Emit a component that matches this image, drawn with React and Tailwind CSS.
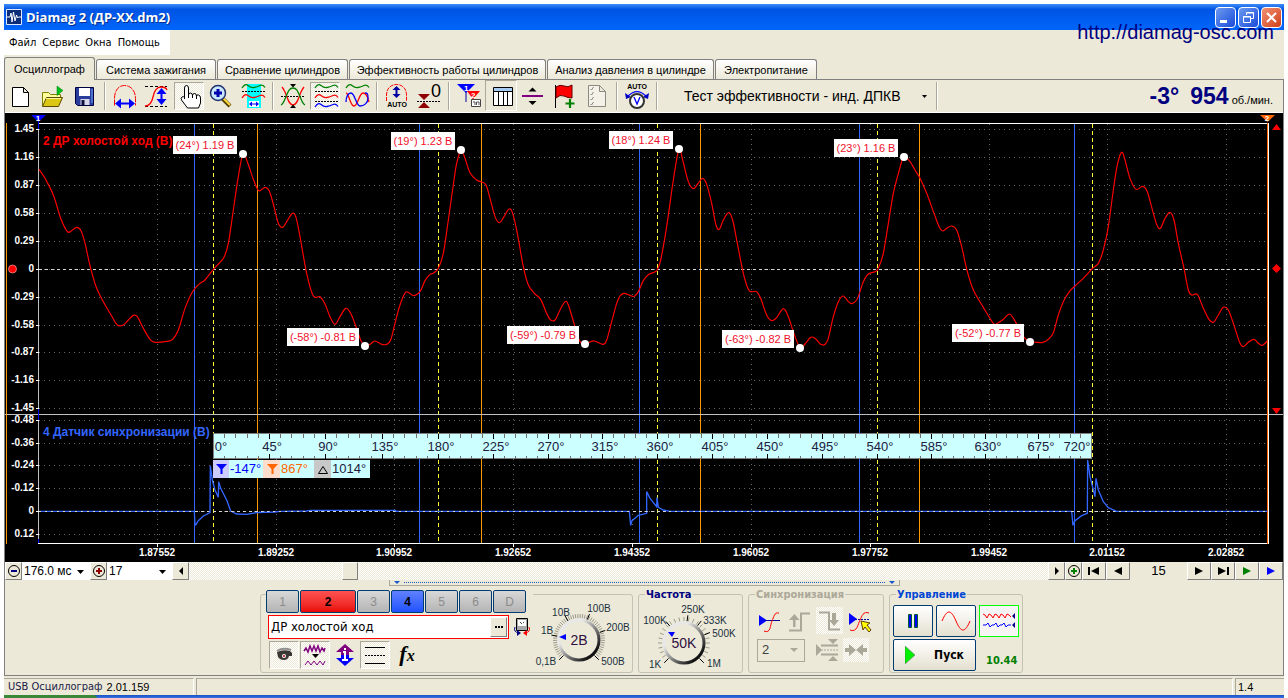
import React, { useState } from "react";

const HATCH =
  "bg-[repeating-conic-gradient(#ffffff_0_25%,#ece9d8_0_50%)] bg-[length:2px_2px]";

/* ---------- Toolbar icons ---------- */

const WAVE = "q3 -5 6 -2.5 t6 2 t6 -2 t5 2";

const NewIcon = () => (
  <path d="M7.5 7.5h11l5 5v14h-16z M18.5 7.5v5h5" fill="#fff" stroke="#000" />
);

const OpenIcon = () => (
  <>
    <path d="M5.5 26V12.5h6l2 2h10V18" fill="#ffff9c" stroke="#808000" />
    <path d="M5.5 26.5l4-9h16l-4 9z" fill="#dcc814" stroke="#5a4a00" />
    <path d="M9 18.500h15" stroke="#fff8a0" />
    <path d="M20 6l6 4.5l-6 5z" fill="#00c020" stroke="#008000" strokeWidth=".5" />
  </>
);

const SaveIcon = () => (
  <>
    <path d="M6.5 7.5h18v18h-16l-2-2z" fill="#2a3c9c" stroke="#000040" />
    <path d="M10 8h11v8H10z" fill="#fff" />
    <path d="M11.5 19h9v6h-9z" fill="#d8d8e8" />
    <path d="M12.5 20h3v5h-3z" fill="#101040" />
    <path d="M23 9v14" stroke="#6aa8ff" />
  </>
);

const WidthIcon = () => (
  <>
    <path
      d="M5.5 25.5v-7c0-8 4-13 10-13s11 5 11 13v7"
      fill="none"
      stroke="#f00"
      strokeDasharray="6 1"
    />
    <path d="M6 23.5l6-5v4h8v-4l6 5l-6 5v-4h-8v4z" fill="#0000ff" />
  </>
);

const StepIcon = () => (
  <>
    <path d="M4 6.5h22M4 26.5h22" stroke="#000" strokeDasharray="3 2" />
    <path
      d="M4 26c5 0 7-4 8-9s3-10 8-10q5 0 6 3"
      fill="none"
      stroke="#f00"
      strokeWidth="1.3"
    />
    <path d="M20.5 8l5 6h-4v5h4l-5 6l-5-6h4v-5h-4z" fill="#0000ff" />
  </>
);

const HandIcon = () => (
  <path
    d="M11.5 19V8q0-2.500 2-2.500t2 2.500v7q0-2 2-2t2 2.500q0-2 2-2t2 2.500q0-1.500 2-1t2 3v5l-2 5h-11l-6-8q-1-2 .5-3t2.500 .5zM15.5 14v4M19.5 15v3M23.5 16v3"
    fill="#fff"
    stroke="#000"
  />
);

const ZoomIcon = () => (
  <>
    <path d="M17 18l8 8" stroke="#504000" strokeWidth="4" />
    <path d="M18 18l7 7" stroke="#ffd840" strokeWidth="2" />
    <circle cx="13" cy="13" r="7.5" fill="#c8e8ff" stroke="#203070" strokeWidth="1.5" />
    <path d="M13 9v8M9 13h8" stroke="#0000b0" strokeWidth="3" />
  </>
);

const CyanIcon = () => (
  <>
    <path d="M10 4h14v24H10z" fill="#00ffff" />
    <path d={`M5 8${WAVE}`} fill="none" stroke="#008000" strokeWidth="1.3" />
    <path d="M5 11.5h23" stroke="#000" strokeDasharray="2 1" />
    <path d={`M5 18${WAVE}`} fill="none" stroke="#f00" strokeWidth="1.3" />
    <path d="M12 21h10v6H12z" fill="#fff" />
    <path d="M12 24l3-2.500v2h4v-2l3 2.500l-3 2.500v-2h-4v2z" fill="#0000ff" />
  </>
);

const CrossIcon = () => (
  <>
    <path d="M4 16.5h23" stroke="#000" strokeDasharray="2 1" />
    <path
      d="M5 7q1 1 3 5c3 7 4 13 8 13s5-6 8-13q2-4 3-5"
      fill="none"
      stroke="#f00"
      strokeWidth="1.3"
    />
    <path
      d="M4 25q2-1 4-6c3-7 4-11 8-11s5 4 8 11q2 5 4 6"
      fill="none"
      stroke="#008000"
      strokeWidth="1.3"
    />
    <path d="M13 4h6l-3 3.500zM13 28h6l-3-3.500z" fill="#000" />
  </>
);

const ThreeIcon = () => (
  <>
    <path d={`M6 8${WAVE}`} fill="none" stroke="#008000" strokeWidth="1.3" />
    <path d={`M6 18${WAVE}`} fill="none" stroke="#f00" strokeWidth="1.3" />
    <path d={`M6 27${WAVE}`} fill="none" stroke="#0000ff" strokeWidth="1.3" />
    <path d="M6 11.5h23M6 21.5h23" stroke="#000" strokeDasharray="2 1" />
  </>
);

const OverlapIcon = () => (
  <>
    <path d={`M5 8${WAVE}`} fill="none" stroke="#008000" strokeWidth="1.3" />
    <path
      d="M5 13c3 0 4 13 8 13s5-13 9-13s5 5 6 9"
      fill="none"
      stroke="#f00"
      strokeWidth="1.3"
    />
    <path
      d="M5 22c0-5 2-9 5-9c4 0 5 13 9 13s8-3 8-8s-1-5-3-5"
      fill="none"
      stroke="#0000ff"
      strokeWidth="1.3"
    />
  </>
);

const AutoIcon = () => (
  <>
    <path
      d="M5.5 21v-6c0-7 5-10.500 10-10.500s10 3.500 10 10.500v6"
      fill="none"
      stroke="#f00"
      strokeDasharray="4 1"
    />
    <path d="M15.5 6l4 4h-3v4h3l-4 4l-4-4h3v-4h-3z" fill="#0000a0" />
    <text x="16" y="27" textAnchor="middle" fontSize="7" fontWeight="bold">
      AUTO
    </text>
  </>
);

const ZeroIcon = () => (
  <>
    <path d="M5 14h12l-6 6zM5 28h12l-6-6z" fill="#900000" />
    <path d="M4 21.5h24" stroke="#000" strokeDasharray="2 1" />
    <text x="23" y="17" textAnchor="middle" fontSize="18">
      0
    </text>
  </>
);

const MarkerIcon = () => (
  <>
    <path d="M4 4h18l-9 9z" fill="#0000ff" />
    <path d="M13 12v10" stroke="#0000a0" />
    <path d="M14 11h13l-7 8z" fill="#f00" />
    <path d="M20 18v7" stroke="#f00" />
    <text x="11" y="11" fontSize="8" fontWeight="bold" fill="#fff">
      1
    </text>
    <text x="18" y="18" fontSize="8" fontWeight="bold" fill="#fff">
      2
    </text>
    <path d="M18.5 19.5h9v7h-9z" fill="#fff" stroke="#444" />
    <path d="M20 22h2v3M23.5 25v-3h2.500v3" fill="none" stroke="#555" />
  </>
);

const TableIcon = () => (
  <>
    <path d="M8.5 7.5h19v18h-19z" fill="#fff" stroke="#000" />
    <path d="M9 8h18v3H9z" fill="#a6caf0" />
    <path d="M9 11.5h18M13.5 11v14M18.5 11v14M22.5 11v14" stroke="#000" />
  </>
);

const DivideIcon = () => (
  <>
    <path d="M5 16h21" stroke="#800080" strokeWidth="2" />
    <path d="M11.5 11.5h8l-4-4zM11.5 21h8l-4 4z" fill="#000" />
  </>
);

const FlagIcon = () => (
  <>
    <path d="M6.5 5v23" stroke="#000" />
    <path
      d="M7 7q4-3 8-1t8-1v13q-4 0-8-2t-8 2z"
      fill="#f00"
      stroke="#600000"
    />
    <path d="M21 19v9M16.5 23.5h9" stroke="#008000" strokeWidth="2.2" />
  </>
);

const ListIcon = () => (
  <>
    <path
      d="M7.5 5.5h11l6 6v15h-17z M18.5 5.5v6h6"
      fill="#f4f2e8"
      stroke="#8c8a80"
    />
    <path
      d="M9.5 9l1 1l2-3M9.5 14l1 1l2-3M9.5 19l1 1l2-3M9.5 24l1 1l2-3"
      fill="none"
      stroke="#8c8a80"
    />
  </>
);

const AutoVIcon = () => (
  <>
    <text x="16" y="9" textAnchor="middle" fontSize="7" fontWeight="bold">
      AUTO
    </text>
    <path d="M7 16q9-9 18 0" fill="none" stroke="#0000ff" strokeWidth="1.2" />
    <path d="M4 13l1 6l5-2zM28 13l-1 6l-5-2z" fill="#0000c0" />
    <circle cx="16" cy="21" r="7" fill="#fff" stroke="#333" strokeWidth="2" />
    <path d="M13 17l3 7l3-7" fill="none" stroke="#0000ff" strokeWidth="1.3" />
  </>
);

const TOOL_GROUPS = [
  [
    { label: "Новый", Icon: NewIcon },
    { label: "Открыть", Icon: OpenIcon },
    { label: "Сохранить", Icon: SaveIcon },
  ],
  [
    { label: "Период", Icon: WidthIcon },
    { label: "Фронт", Icon: StepIcon },
    { label: "Рука", Icon: HandIcon, pressed: true },
    { label: "Масштаб", Icon: ZoomIcon },
    { label: "Выделение", Icon: CyanIcon },
  ],
  [
    { label: "Наложить", Icon: CrossIcon },
    { label: "Разделить", Icon: ThreeIcon, pressed: true },
    { label: "Совместить", Icon: OverlapIcon },
  ],
  [
    { label: "Авто", Icon: AutoIcon },
    { label: "Ноль", Icon: ZeroIcon },
  ],
  [
    { label: "Маркеры", Icon: MarkerIcon },
    { label: "Таблица", Icon: TableIcon, flat: true },
    { label: "Разделитель", Icon: DivideIcon },
    { label: "Флаг", Icon: FlagIcon },
    { label: "Список", Icon: ListIcon },
  ],
  [{ label: "Авто напряжение", Icon: AutoVIcon }],
];

const ToolButton = ({ label, Icon, pressed, flat }) => (
  <button aria-label={label} className="relative h-8 w-8">
    {pressed && (
      <span
        className={`absolute inset-x-px top-0.5 bottom-0.5 border border-t-[#aca899] border-l-[#aca899] border-r-white border-b-white ${HATCH}`}
      />
    )}
    {flat && (
      <span className="absolute inset-0 bottom-px border border-t-[#aca899] border-l-[#aca899] border-r-white border-b-white" />
    )}
    <svg viewBox="0 0 32 32" className="relative h-8 w-8">
      <Icon />
    </svg>
  </button>
);

const Separator = () => (
  <span className="flex w-2 justify-center py-0.5">
    <span className="w-0.5 border-l border-[#aca899] bg-white" />
  </span>
);

/* ---------- Header ---------- */

const TitleBar = () => (
  <header className="relative flex h-[26px] items-center justify-between bg-linear-to-b from-[#3c8cf8] via-[#0054e3] via-20% to-[#0066fc] px-0.5">
    <div className="flex items-center gap-1">
      <svg viewBox="0 0 16 16" className="h-4 w-4">
        <path d="M.5 .5h15v15H.5z" fill="#0c2c78" stroke="#dfe8ff" />
        <path
          d="M1 8h3l1-4l1 9l1.500-10l1.500 9l1.500-6l1 3l1-1h3"
          fill="none"
          stroke="#fff"
        />
      </svg>
      <h1 className="font-['Open_Sans',sans-serif] text-[13px] leading-5 font-bold text-white [text-shadow:1px_1px_#00308f]">
        Diamag 2 (ДР-XX.dm2)
      </h1>
    </div>
    <div className="flex gap-0.5">
      <button
        aria-label="Свернуть"
        className="h-[21px] w-[21px] rounded-sm border border-white bg-linear-to-br from-[#6c98f0] to-[#1c48d8]"
      >
        <svg viewBox="0 0 19 19">
          <path d="M4 12h7v3H4z" fill="#fff" />
        </svg>
      </button>
      <button
        aria-label="Развернуть"
        className="h-[21px] w-[21px] rounded-sm border border-white bg-linear-to-br from-[#6c98f0] to-[#1c48d8]"
      >
        <svg viewBox="0 0 19 19">
          <path
            d="M7.5 7V4.5h7v6H12M4.5 8.5h7v6h-7zM4 9h8M7 5h8"
            fill="none"
            stroke="#fff"
          />
        </svg>
      </button>
      <button
        aria-label="Закрыть"
        className="h-[21px] w-[21px] rounded-sm border border-white bg-linear-to-br from-[#f09070] to-[#d03c10]"
      >
        <svg viewBox="0 0 19 19">
          <path d="M5 5l9 9M14 5l-9 9" stroke="#fff" strokeWidth="2" />
        </svg>
      </button>
    </div>
    <a
      href="http://diamag-osc.com"
      className="absolute top-4 right-2.5 text-[20px] leading-6 text-[#000080]"
    >
      http://diamag-osc.com
    </a>
  </header>
);

const MenuBar = () => (
  <nav className="flex h-[25px]">
    <div className="flex items-center gap-1.5 bg-white pr-2.5 pl-[5px] font-['DejaVu_Sans_Condensed','DejaVu_Sans',sans-serif] text-[11px] leading-4">
      {["Файл", "Сервис", "Окна", "Помощь"].map((item) => (
        <button key={item}>{item}</button>
      ))}
    </div>
  </nav>
);

const TABS = [
  { name: "Осциллограф", width: "w-[91px]" },
  { name: "Система зажигания", width: "w-[120px]" },
  { name: "Сравнение цилиндров", width: "w-[131px]" },
  { name: "Эффективность работы цилиндров", width: "w-[197px]" },
  { name: "Анализ давления в цилиндре", width: "w-[167px]" },
  { name: "Электропитание", width: "w-[102px]" },
];

const TabBar = () => {
  const [active, setActive] = useState(0);
  return (
    <div role="tablist" className="mt-0.5 flex items-end gap-px text-[11px] leading-4">
      {TABS.map((tab, i) => (
        <button
          key={tab.name}
          role="tab"
          aria-selected={i === active}
          onClick={() => setActive(i)}
          className={`${tab.width} rounded-t-[3px] border border-b-0 border-[#808080] whitespace-nowrap ${
            i === active
              ? "relative -mb-px h-[23px] bg-[#ece9d8]"
              : "h-5 bg-linear-to-b from-white to-[#ece9d8]"
          }`}
        >
          {tab.name}
        </button>
      ))}
    </div>
  );
};

const Toolbar = () => (
  <div className="flex h-8 items-center justify-between">
    <div className="flex">
      {TOOL_GROUPS.map((group, i) => (
        <React.Fragment key={i}>
          {group.map((tool) => (
            <ToolButton key={tool.label} {...tool} />
          ))}
          <Separator />
        </React.Fragment>
      ))}
      <div className="flex h-8 w-[272px] items-center justify-between pr-1.5 pl-[23px]">
        <button className="text-[14px] whitespace-nowrap">
          Тест эффективности - инд. ДПКВ
        </button>
        <svg viewBox="0 0 5 3" className="h-[3px] w-[5px]">
          <path d="M0 0h5L2.5 3z" />
        </svg>
      </div>
      <Separator />
    </div>
    <p className="flex items-baseline gap-[3px] pr-2.5 whitespace-nowrap">
      <span className="mr-2 text-[23px] leading-8 font-bold text-[#000080]">-3°</span>
      <span className="text-[23px] leading-8 font-bold text-[#000080]">954</span>
      <span className="text-[11px]">об./мин.</span>
    </p>
  </div>
);

/* ---------- Oscillogram ---------- */

// Samples are stored as x,y pairs, three units per chart pixel
const RED_TRACE = [
  {
    origin: [0, 110],
    points:
      "117,178 135,205 160,255 182,325 202,365 215,362 230,352 243,362 255,400 272,475 290,535 310,575 335,618 352,645 370,645 385,630 400,616 412,620 430,655 450,688 465,697 500,694 518,688 535,660 555,595 572,555 585,535 600,520 615,510 640,478 655,462 672,442 685,400 700,300 715,200 729,132 743,158 760,208 775,241 786,238 796,232 808,243 822,290 835,340 848,352 862,332 877,310 888,322 900,380 920,490 940,558 960,560 975,582 990,620 1005,643 1020,620 1037,595 1052,610 1070,655 1082,690 1094,707 1110,703 1125,693 1145,703 1160,703 1172,690 1185,640 1200,585 1218,546 1240,557 1260,545 1275,512 1290,493",
  },
  {
    origin: [430, 120],
    points:
      "0,463 12,458 25,445 40,400 55,300 72,180 80,130 93,90 105,115 120,158 140,180 155,186 168,195 180,235 195,290 208,308 222,290 237,267 248,280 262,340 280,440 295,495 315,522 332,538 350,580 362,600 375,600 390,570 405,545 415,555 435,620 450,665 465,672 478,667 493,663 518,673 530,660 545,605 560,550 570,528 582,520 600,526 613,529 625,515 640,482 655,464 680,452 692,420 710,320 730,180 747,87 758,120 775,185 790,206 803,192 818,175 830,193 845,250 858,315 868,328 880,300 896,278 908,300 922,370 940,460 955,508 965,515 980,515 992,535 1010,585 1025,602 1040,593 1060,566 1075,590 1090,635 1110,684 1125,672 1142,652 1155,655 1172,673 1185,673 1195,655 1210,590 1225,545 1240,528 1255,545 1265,551 1280,540 1290,515",
  },
  {
    origin: [860, 110],
    points:
      "0,545 10,515 25,492 45,485 55,475 70,430 85,340 100,250 118,180 131,141 148,152 165,180 180,205 200,250 222,310 238,352 248,363 260,355 275,348 290,360 305,410 322,485 340,540 370,592 400,640 412,640 430,628 448,612 462,628 480,662 495,685 510,695 530,697 548,697 565,688 580,668 595,615 610,575 628,545 645,528 670,505 698,475 715,460 730,420 745,350 760,240 772,165 785,127 795,150 810,205 828,238 848,229 862,245 880,310 892,348 902,354 915,325 930,307 942,330 955,400 972,475 985,540 995,555 1012,553 1028,590 1045,625 1060,637 1075,615 1090,592 1105,600 1125,655 1138,695 1150,710 1165,697 1182,688 1195,700 1207,706 1222,693",
  },
];

const BLUE_TRACE = [
  {
    origin: [0, 400],
    points:
      "117,334 583,334 585,375 588,374 590,370 595,362 610,348 630,338 631,197 637,240 645,270 655,292 656,245 662,265 680,300 692,333 710,342 740,343 770,338 825,336 840,334 920,333 930,331 1185,331 1190,334 1290,334",
  },
  {
    origin: [430, 400],
    points:
      "0,334 598,334 602,376 606,362 625,346 650,340 650,275 660,295 680,320 681,292 685,322 700,330 720,334 1290,334",
  },
  {
    origin: [860, 400],
    points:
      "0,334 635,334 639,376 645,362 665,347 682,340 683,180 690,230 705,290 708,235 715,270 730,305 745,323 770,334 1222,334",
  },
];

// Catmull-Rom spline through the samples
const smooth = (points) => {
  const p = points.split(" ").map((s) => s.split(",").map(Number));
  let d = `M${p[0]}`;
  for (let i = 0; i < p.length - 1; i++) {
    const a = p[i - 1] || p[i];
    const b = p[i];
    const c = p[i + 1];
    const e = p[i + 2] || c;
    d += `C${b[0] + (c[0] - a[0]) / 6},${b[1] + (c[1] - a[1]) / 6} ${
      c[0] - (e[0] - b[0]) / 6
    },${c[1] - (e[1] - b[1]) / 6} ${c}`;
  }
  return d;
};

const UPPER_AXIS = [
  ["1.45", 129], ["1.16", 157], ["0.87", 185], ["0.58", 213], ["0.29", 241],
  ["0", 269], ["-0.29", 297], ["-0.58", 325], ["-0.87", 352], ["-1.16", 380],
  ["-1.45", 408],
];
const LOWER_AXIS = [
  ["-0.48", 420], ["-0.36", 443], ["-0.24", 465], ["-0.12", 488], ["0", 511],
  ["0.12", 534],
];
const TIME_AXIS = [
  ["1.87552", 157], ["1.89252", 276], ["1.90952", 394], ["1.92652", 513],
  ["1.94352", 632], ["1.96052", 751], ["1.97752", 870], ["1.99452", 989],
  ["2.01152", 1107], ["2.02852", 1226],
];
const CURSORS = [
  { color: "#3366ff", xs: [194, 419, 639, 859, 1074] },
  { color: "#ff9900", xs: [257, 481, 700, 919] },
];
const PHASES = [213, 438, 657, 877, 1092];
const CALLOUTS = [
  ["(24°) 1.19 В", 243, 154], ["(19°) 1.23 В", 461, 150],
  ["(18°) 1.24 В", 679, 149], ["(23°) 1.16 В", 904, 157],
  ["(-58°) -0.81 В", 365, 346], ["(-59°) -0.79 В", 585, 344],
  ["(-63°) -0.82 В", 800, 348], ["(-52°) -0.77 В", 1030, 342],
];
const RULER = [
  213, 269, 325, 382, 438, 493, 548, 602, 657, 712, 767, 822, 877, 931, 985,
  1038, 1091,
];

const Ruler = () => (
  <g>
    <rect x="213.5" y="433.5" width="878" height="25" fill="#ccffff" stroke="#808080" />
    {RULER.map((x, i) => (
      <g key={x} shapeRendering="crispEdges">
        {i > 0 && i < 16 && (
          <path d={`M${x + 0.5} 434v5M${x + 0.5} 454v5`} stroke="#000" />
        )}
        {i < 16 &&
          [1, 2, 3, 4].map((k) => {
            const mx = Math.round(x + ((RULER[i + 1] - x) * k) / 5) + 0.5;
            return (
              <path key={k} d={`M${mx} 434v4M${mx} 456v3`} stroke="#707070" />
            );
          })}
      </g>
    ))}
    {RULER.map((x, i) => (
      <text
        key={x}
        x={i === 0 ? 221 : i === 16 ? 1077 : x + 3}
        y="451"
        textAnchor="middle"
        fontSize="13"
        fill="#202040"
      >
        {i * 45}°
      </text>
    ))}
    <rect x="213" y="460" width="157" height="18" fill="#ccffff" />
    <rect x="213" y="460" width="16" height="18" fill="#ccccff" />
    <rect x="263" y="460" width="17" height="18" fill="#ffddcc" />
    <rect x="314" y="460" width="17" height="18" fill="#c8c8c8" />
    <path d="M216 464h11l-4.500 5v5h-2v-5z" fill="#0000ff" />
    <path d="M267 464h11l-4.500 5v5h-2v-5z" fill="#ff6600" />
    <path d="M318.5 473.5h9l-4.500-7z" fill="none" stroke="#000" />
    <g fontSize="13">
      <text x="230" y="473" fill="#0000ff">-147°</text>
      <text x="281" y="473" fill="#ff6600">867°</text>
      <text x="332" y="473" fill="#202040">1014°</text>
    </g>
  </g>
);

const Oscillogram = () => (
  <svg
    viewBox="5 113 1278 449"
    className="block w-full bg-black font-['Liberation_Sans',Arial,sans-serif]"
  >
    <g stroke="#666" strokeDasharray="1 4" shapeRendering="crispEdges">
      {[...UPPER_AXIS, ...LOWER_AXIS].map(([, y]) => (
        <path key={y} d={`M39 ${y + 0.5}H1267`} />
      ))}
      {TIME_AXIS.map(([, x]) => (
        <path key={x} d={`M${x + 0.5} 124V543`} />
      ))}
    </g>

    <g fill="#f00" fontSize="12" fontWeight="bold">
      <text x="43" y="145">2 ДР холостой ход (В)</text>
      <text x="43" y="436" fill="#3366ff">4 Датчик синхронизации (В)</text>
    </g>

    <g shapeRendering="crispEdges" fill="none">
      {CURSORS.map(({ color, xs }) =>
        xs.map((x) => <path key={x} d={`M${x + 0.5} 124V543`} stroke={color} />)
      )}
      {PHASES.map((x) => (
        <path
          key={x}
          d={`M${x + 0.5} 124V543`}
          stroke="#ffff33"
          strokeDasharray="4 3"
        />
      ))}
      <path d="M5 414.5H1283" stroke="#c0c0c0" />
      <path d="M6.5 123V544" stroke="#ff9900" />
      <path d="M38.5 123V543" stroke="#c0c0c0" />
      <path d="M38 123.5H1268.5V543.5H38" stroke="#fff" />
      <path d="M1267.5 123V544" stroke="#ff6600" />
      <path d="M38.5 121v8M38.5 408v12M38.5 539v4" stroke="#0000ff" />
      {[...UPPER_AXIS, ...LOWER_AXIS].map(([, y]) => (
        <path key={y} d={`M36 ${y + 0.5}h3`} stroke="#fff" />
      ))}
      {TIME_AXIS.map(([, x]) => (
        <path key={x} d={`M${x + 0.5} 544v3`} stroke="#fff" />
      ))}
    </g>

    <path
      d="M39 269.5H1267M39 511.5H1267"
      stroke="#d8d8d8"
      strokeDasharray="3 3"
      shapeRendering="crispEdges"
    />
    {RED_TRACE.map(({ origin, points }) => (
      <path
        key={origin[0]}
        d={smooth(points)}
        transform={`translate(${origin}) scale(0.33333)`}
        fill="none"
        stroke="#f00"
        strokeWidth="3.5"
      />
    ))}
    {BLUE_TRACE.map(({ origin, points }) => (
      <polyline
        key={origin[0]}
        points={points}
        transform={`translate(${origin}) scale(0.33333)`}
        fill="none"
        stroke="#3366ff"
        strokeWidth="4"
      />
    ))}
    <path
      d="M39 511.5H1267"
      stroke="#d8d8d8"
      strokeDasharray="2 4"
      shapeRendering="crispEdges"
    />

    <g fill="#fff" fontSize="10" fontWeight="bold">
      {[...UPPER_AXIS, ...LOWER_AXIS].map(([label, y]) => (
        <text key={y} x="34" y={y + 3} textAnchor="end">
          {label}
        </text>
      ))}
      {TIME_AXIS.map(([label, x]) => (
        <text key={x} x={x} y="556" textAnchor="middle">
          {label}
        </text>
      ))}
    </g>

    {CALLOUTS.map(([label, x, y]) => {
      const width = label.startsWith("(-") ? 72 : 64;
      return (
        <g key={label}>
          <rect x={x - 6 - width} y={y - 18} width={width} height="18" fill="#fff" />
          <text
            x={x - 6 - width / 2}
            y={y - 5}
            textAnchor="middle"
            fontSize="11"
            fill="#f0102c"
          >
            {label}
          </text>
          <circle cx={x} cy={y} r="4" fill="#fff" />
        </g>
      );
    })}

    <Ruler />

    <path d="M31 115h15l-7.500 7z" fill="#0000ff" />
    <path d="M1260 115h15l-7.500 7z" fill="#ff6600" />
    <g fill="#fff" fontSize="8" fontWeight="bold" textAnchor="middle">
      <text x="38" y="121">1</text>
      <text x="1267" y="121">2</text>
    </g>
    <circle cx="12.5" cy="269" r="4" fill="#f00" stroke="#ffa0a0" strokeWidth=".7" />
    <path
      d="M1272 130h9l-4.500-6zM1272 268.5l4.500-4.500l4.500 4.500l-4.500 4.500zM1272 408h9l-4.500 6z"
      fill="#f00"
    />
  </svg>
);

/* ---------- Navigation row ---------- */

const RAISED =
  "flex items-center justify-center border border-t-white border-l-white border-r-[#808080] border-b-[#808080] bg-[#ece9d8]";

const NavButton = ({ label, d, color = "#000", width = "w-6" }) => (
  <button aria-label={label} className={`${RAISED} ${width} h-[18px] shrink-0`}>
    <svg viewBox="0 0 14 14" className="h-3.5 w-3.5">
      <path d={d} fill={color} />
    </svg>
  </button>
);

const CircleButton = ({ label, color, plus }) => (
  <button aria-label={label} className={`${RAISED} h-[18px] w-[17px] shrink-0`}>
    <svg viewBox="0 0 14 14" className="h-3.5 w-3.5 shrink-0">
      <circle cx="7" cy="7" r="5.5" fill="none" stroke="#000" />
      <path d={plus ? "M7 4v6M4 7h6" : "M4 7h6"} stroke={color} strokeWidth="2" />
    </svg>
  </button>
);

const DropDown = ({ label, value, width }) => (
  <span className={`relative ${width} h-[18px] shrink-0 bg-white`}>
    <select
      aria-label={label}
      defaultValue={value}
      className="block h-[18px] w-full appearance-none bg-white pl-0.5 text-[12px] leading-[18px]"
    >
      <option>{value}</option>
    </select>
    <svg viewBox="0 0 7 4" className="pointer-events-none absolute top-2 right-1.5 h-1 w-[7px]">
      <path d="M0 0h7L3.5 4z" />
    </svg>
  </span>
);

const NavRow = () => (
  <div className="flex h-[18px] items-center">
    <CircleButton label="Уменьшить" color="#000080" />
    <DropDown label="Развёртка" value="176.0 мс" width="w-[68px]" />
    <CircleButton label="Увеличить" color="#900000" plus />
    <DropDown label="Кадр" value="17" width="w-[65px]" />
    <NavButton label="Назад" d="M9 3v8L5 7z" width="w-[17px]" />
    <div className={`flex h-[18px] flex-1 pl-[153px] ${HATCH}`}>
      <span className={`${RAISED} h-[18px] w-4`} />
    </div>
    <NavButton label="Вперёд" d="M5 3v8l4-4z" width="w-[17px]" />
    <CircleButton label="Добавить" color="#008000" plus />
    <NavButton label="В начало" d="M1 3h2v8H1zM12 3v8L4 7z" />
    <NavButton label="Предыдущий" d="M11 3v8L3 7z" />
    <output className="w-[57px] text-center text-[13px] leading-[18px]">15</output>
    <NavButton label="Следующий" d="M3 3v8l8-4z" />
    <NavButton label="В конец" d="M2 3v8l8-4zM11 3h2v8h-2z" />
    <NavButton label="Воспроизвести" d="M3 3v8l8-4z" color="#008000" />
    <NavButton label="Пуск записи" d="M3 3v8l8-4z" color="#0000ff" />
  </div>
);

/* ---------- Bottom panels ---------- */

const Group = ({ title, color, width, children }) => (
  <fieldset
    className={`relative ${width} mt-2 h-[79px] shrink-0 rounded-[3px] border border-[#c4c2b4]`}
  >
    {title && (
      <legend
        className={`absolute -top-2 left-1.5 bg-[#ece9d8] px-px font-['DejaVu_Sans_Condensed','DejaVu_Sans',sans-serif] text-[11px] leading-4 font-bold ${color}`}
      >
        {title}
      </legend>
    )}
    {children}
  </fieldset>
);

const Knob = ({ cx, cy, value, labels, pointer, ticks, id }) => {
  const marks = Array.from({ length: ticks }, (_, i) => {
    const a = ((135 + (270 * i) / (ticks - 1)) * Math.PI) / 180;
    return [Math.cos(a), Math.sin(a)];
  });
  return (
    <>
      <defs>
        <linearGradient id={id} x1="0" y1="0" x2="1" y2="1">
          <stop offset="0.3" stopColor="#e8e8e8" />
          <stop offset="0.85" stopColor="#101010" />
        </linearGradient>
      </defs>
      {marks.map(([c, s], i) => (
        <path
          key={i}
          d={`M${cx + c * 22} ${cy + s * 22}L${cx + c * 26} ${cy + s * 26}`}
          stroke="#9c9a8c"
        />
      ))}
      {labels.map(([text, x, y, angle]) => {
        const a = (angle * Math.PI) / 180;
        return (
          <g key={text}>
            <path
              d={`M${cx + Math.cos(a) * 22} ${cy - Math.sin(a) * 22}L${
                cx + Math.cos(a) * 28
              } ${cy - Math.sin(a) * 28}`}
              stroke="#000"
            />
            <text x={x} y={y + 4} textAnchor="middle" fontSize="10" fill="#203040">
              {text}
            </text>
          </g>
        );
      })}
      <circle cx={cx} cy={cy} r="20" fill="#ece9d8" stroke={`url(#${id})`} strokeWidth="3" />
      <path d={pointer} fill="#0000ff" />
      <text x={cx} y={cy + 5} textAnchor="middle" fontSize="14" fill="#301040">
        {value}
      </text>
    </>
  );
};

const GREY = "bg-linear-to-b from-[#d8d8d8] to-[#b4b4b4] text-[#8c8c8c]";
const CHANNELS = [
  { name: "1", style: `w-[33px] ${GREY}` },
  { name: "2", style: "w-14 bg-linear-to-b from-[#ff5050] to-[#e80000] font-bold text-black" },
  { name: "3", style: `w-[33px] ${GREY}` },
  { name: "4", style: "w-[33px] bg-linear-to-b from-[#6080ff] to-[#2050ff] font-bold text-black" },
  { name: "5", style: `w-[33px] ${GREY}` },
  { name: "6", style: `w-[33px] ${GREY}` },
  { name: "D", style: `w-[33px] ${GREY}` },
];

const SUNKEN = `border border-t-[#aca899] border-l-[#aca899] border-r-white border-b-white ${HATCH}`;

const ChannelPanel = () => (
  <Group width="w-[373px]">
    <div className="flex">
      <div className="-mt-[5px] flex w-[272px] flex-col pl-[5px]">
        <div className="flex gap-px bg-[#ece9d8]">
          {CHANNELS.map((ch) => (
            <button
              key={ch.name}
              className={`h-[23px] rounded-[2px] border border-[#003c74] text-[12px] leading-5 ${ch.style}`}
            >
              {ch.name}
            </button>
          ))}
        </div>
        <div className="mt-0.5 flex items-center gap-1 pl-0.5">
          <div className="flex h-6 w-[241px] border border-[#f00] bg-white p-px">
            <input
              aria-label="Имя канала"
              defaultValue="ДР холостой ход"
              className="min-w-0 flex-1 bg-white px-px font-['DejaVu_Sans_Condensed','DejaVu_Sans',sans-serif] text-[13px] leading-5 outline-none"
            />
            <button aria-label="Выбрать" className={`${RAISED} w-[17px] gap-px`}>
              <span className="h-0.5 w-0.5 bg-black" />
              <span className="h-0.5 w-0.5 bg-black" />
              <span className="h-0.5 w-0.5 bg-black" />
            </button>
          </div>
          <button aria-label="Сменить датчик">
            <svg viewBox="0 0 18 20" className="h-5 w-[18px]">
              <path d="M3.5 1.5h11v12h-11z" fill="#a8a8a8" stroke="#000" />
              <path d="M5 3h8v6H5z" fill="#fff" />
              <path d="M7 5l2 2M11 5l-1 1" stroke="#444" />
              <path d="M2 10q-2 5 4 6" fill="none" stroke="#000080" />
              <path d="M4 13l4 3l-4 3z" fill="#000080" />
              <path d="M16 10q2 5-4 6" fill="none" stroke="#f00" />
              <path d="M14 13l-4 3l4 3z" fill="#f00" />
            </svg>
          </button>
        </div>
        <div className="mt-px flex h-[29px] items-center gap-px pl-[3px]">
          <button aria-label="Видимость" className={`${SUNKEN} h-7 w-[30px]`}>
            <svg viewBox="0 0 28 26">
              <path d="M7 10q6-3 13-1l2 2v3h-3q-1 4-5 4t-6-3z" fill="#3a3634" />
              <path d="M7 9q6-4 14-1" fill="none" stroke="#909090" strokeWidth="2" />
              <circle cx="14" cy="14" r="2" fill="#fff" />
              <circle cx="14" cy="14" r="1" fill="#a00000" />
            </svg>
          </button>
          <button aria-label="Фильтр" className={`${SUNKEN} h-7 w-[30px]`}>
            <svg viewBox="0 0 28 26">
              <path
                d="M3 9l2-3l2 4l2-6l2 5l2-5l2 5l2-5l2 6l2-4l2 3l1-3"
                fill="none"
                stroke="#800080"
                strokeWidth="1.5"
              />
              <path d="M11 12h7l-3.500 4z" />
              <path
                d="M4 23l3-4l3 4l3-4l3 4l3-4l3 4l2-4"
                fill="none"
                stroke="#800080"
              />
            </svg>
          </button>
          <button aria-label="Инверсия" className="h-7 w-7">
            <svg viewBox="0 0 28 26">
              <path d="M14 2l9 8h-5v3h-8v-3H5z" fill="#800080" />
              <path d="M14 24l9-8h-5v-3h-8v3H5z" fill="#0000ff" />
              <path d="M14 6v2M12 10h2v8M11 18h6" fill="none" stroke="#fff" strokeWidth="2" />
            </svg>
          </button>
          <button aria-label="Уровни" className={`${SUNKEN} h-7 w-[30px]`}>
            <svg viewBox="0 0 28 26">
              <path d="M4 5.5h20M4 21.5h20" stroke="#000" />
              <path d="M4 13.5h20" stroke="#000" strokeDasharray="2 1" />
            </svg>
          </button>
          <button
            aria-label="Функция"
            className="w-8 font-['Liberation_Serif',serif] text-[22px] leading-6 font-bold italic"
          >
            f<span className="text-[16px]">x</span>
          </button>
        </div>
      </div>
      <svg viewBox="534 595 98 77" className="h-[77px] w-[98px]">
        <Knob
          id="volt"
          cx={580}
          cy={640}
          value="2В"
          ticks={50}
          pointer="M560 637l7-3v6z"
          labels={[
            ["0,1В", 547, 661, 225],
            ["1В", 548, 630, 170],
            ["10В", 562, 612, 120],
            ["100В", 600, 608, 68],
            ["200В", 619, 627, 20],
            ["500В", 614, 661, 315],
          ]}
        />
      </svg>
    </div>
  </Group>
);

const FrequencyPanel = () => (
  <Group title="Частота" color="text-[#000080]" width="w-[105px]">
    <svg viewBox="639 595 103 77" className="h-[77px] w-[103px]">
      <Knob
        id="freq"
        cx={684}
        cy={643}
        value="50K"
        ticks={25}
        pointer="M668 632h7l-3 5z"
        labels={[
          ["1K", 655, 664, 225],
          ["100K", 655, 620, 130],
          ["250K", 693, 609, 82],
          ["333K", 715, 620, 52],
          ["500K", 724, 633, 22],
          ["1M", 714, 663, 315],
        ]}
      />
    </svg>
  </Group>
);

const SyncPanel = () => (
  <Group title="Синхронизация" color="text-[#aca899]" width="w-[136px]">
    <div className="grid grid-cols-[30px_30px_30px_30px] justify-center pt-3">
      <button aria-label="Уровень" className="h-[27px]">
        <svg viewBox="0 0 30 27" className="h-[27px] w-[30px]">
          <path d="M3 8v11l8-5.500z" fill="#0000ff" />
          <path d="M9 13.5h15" stroke="#0000a0" />
          <path d="M8 24c7 3 6-6 8-10s2-9 7-8" fill="none" stroke="#f00" />
        </svg>
      </button>
      <button aria-label="Фронт" disabled className="h-[27px]">
        <svg viewBox="0 0 30 27" className="h-[27px] w-[30px]">
          <path d="M3 23.5h12v-17h9" fill="none" stroke="#aca899" strokeWidth="2" />
          <path d="M7 20v-7H3l5.500-6l5 6h-4v7z" fill="#aca899" />
        </svg>
      </button>
      <button aria-label="Спад" disabled className={`h-[27px] w-[27px] ${HATCH}`}>
        <svg viewBox="0 0 27 27" className="h-[27px] w-[27px]">
          <path d="M3 5.5h10v17h11" fill="none" stroke="#aca899" strokeWidth="2" />
          <path d="M16 6v7h-3l5 6l5-6h-3V6z" fill="#aca899" />
        </svg>
      </button>
      <button aria-label="Курсор" className="h-[27px]">
        <svg viewBox="0 0 30 27" className="h-[27px] w-[30px]">
          <path d="M3 6v12l8-6z" fill="#0000ff" />
          <path d="M9 12.5h15" stroke="#0000a0" strokeDasharray="2 1" />
          <path d="M4 23c7 3 8-6 10-10s3-9 9-7" fill="none" stroke="#f00" />
          <path d="M15 14l9 2l-3 2l4 5l-2 2l-4-5l-2 3z" fill="#ff0" stroke="#604000" />
        </svg>
      </button>
    </div>
    <div className="mt-1 flex items-center gap-2.5 pl-2">
      <span className="relative h-[23px] w-12 border border-[#aca899]">
        <select
          aria-label="Канал синхронизации"
          defaultValue="2"
          className="block h-5 w-full appearance-none pl-1 text-[13px] leading-5 text-[#404040]"
        >
          <option>2</option>
        </select>
        <svg viewBox="0 0 8 4" className="pointer-events-none absolute top-2 right-1.5 h-1 w-2">
          <path d="M0 0h8L4 4z" fill="#aca899" />
        </svg>
      </span>
      <div className="flex items-center gap-1">
        <svg viewBox="0 0 24 24" className="h-6 w-6">
          <path d="M1 6v12l6-6z" fill="#aca899" />
          <path d="M6 7.5h17M6 16.5h17" stroke="#aca899" strokeWidth="2" />
          <path d="M6 12h17" stroke="#aca899" strokeDasharray="2 1" />
          <path d="M13 1h10l-5 5zM13 23h10l-5-5z" fill="#aca899" />
        </svg>
        <button aria-label="Центр" disabled className={`h-6 w-[26px] ${HATCH}`}>
          <svg viewBox="0 0 26 24" className="h-6 w-[26px]">
            <path d="M2 12h7M17 12h7" stroke="#aca899" strokeWidth="4" />
            <path d="M6 6v12l7-6zM20 6v12l-7-6z" fill="#aca899" />
          </svg>
        </button>
      </div>
    </div>
  </Group>
);

const XP_BUTTON =
  "flex items-center justify-center rounded-[2px] border border-[#003c74] bg-linear-to-b from-white to-[#e4e0d0]";

const ControlPanel = () => (
  <Group title="Управление" color="text-[#0046d5]" width="w-[134px]">
    <div className="flex flex-col gap-0.5 pt-2.5 pl-[3px]">
      <div className="flex gap-[3px]">
        <button aria-label="Пауза" className={`${XP_BUTTON} h-8 w-10`}>
          <svg viewBox="0 0 12 16" className="h-4 w-3">
            <path d="M1.5 1.5h3v13h-3zM7.5 1.5h3v13h-3z" fill="#0000ff" stroke="#006030" />
          </svg>
        </button>
        <button aria-label="Одиночный" className={`${XP_BUTTON} h-8 w-10`}>
          <svg viewBox="0 0 30 20" className="h-5 w-[30px]">
            <path d="M1 10c5-12 9-12 14 0s9 12 14 0" fill="none" stroke="#f00" />
          </svg>
        </button>
        <button
          aria-label="Непрерывный"
          className="flex h-8 w-10 items-center justify-center border border-[#00ff00] bg-[#f6f4f4]"
        >
          <svg viewBox="0 0 34 20" className="h-5 w-[34px]">
            <path
              d="M1 3l2 1l2 3l2-4l2 1l2 3l2-4l2 1l2 3l2-4l2 1l2 3l2-4l2 1l2 2"
              fill="none"
              stroke="#f00"
            />
            <path
              d="M1 14h3l2-2l2 4l2-2h2l2-2l2 4l2-2h2l2-2l2 4l2-2h3"
              fill="none"
              stroke="#0000ff"
            />
            <path d="M33 2v6l-3-3zM33 11v6l-3-3z" fill="#000080" />
          </svg>
        </button>
      </div>
      <div className="flex items-end gap-2.5">
        <button className={`${XP_BUTTON} h-8 w-[83px] gap-[19px] font-['DejaVu_Sans_Condensed','DejaVu_Sans',sans-serif] text-[12px] font-bold`}>
          <svg viewBox="0 0 10 18" className="h-[18px] w-2.5">
            <path d="M0 0l10 9l-10 9z" fill="#00f000" stroke="#606060" strokeWidth=".5" />
          </svg>
          Пуск
        </button>
        <output className="pb-0.5 font-['DejaVu_Sans_Condensed','DejaVu_Sans',sans-serif] text-[11px] leading-4 font-bold text-[#008000]">
          10.44
        </output>
      </div>
    </div>
  </Group>
);

const Splitter = () => (
  <div className="mx-auto flex h-1.5 w-[511px] items-center justify-between border border-t-0 border-[#aca899] px-1">
    <svg viewBox="0 0 6 3" className="h-[3px] w-1.5">
      <path d="M0 0h6L3 3z" fill="#1c58c8" />
    </svg>
    <span className="mx-1 flex-1 border-t border-dotted border-[#1c58c8]" />
    <svg viewBox="0 0 6 3" className="h-[3px] w-1.5">
      <path d="M0 0h6L3 3z" fill="#1c58c8" />
    </svg>
  </div>
);

const StatusBar = () => (
  <footer className="flex h-[19px] gap-0.5 bg-[#ece9d8] pt-0.5 text-[11px] leading-4">
    <div className="flex w-[190px] gap-1 border-t border-r border-t-[#aca899] border-r-white pl-1">
      <span className="font-['DejaVu_Sans_Condensed','DejaVu_Sans',sans-serif] text-[#202048]">
        USB Осциллограф
      </span>
      <span>2.01.159</span>
    </div>
    <div className="flex-1 border-t border-r border-l border-t-[#aca899] border-r-white border-l-[#aca899]" />
    <div className="w-[49px] border-t border-l border-[#aca899] pl-0.5">1.4</div>
  </footer>
);

const App = () => (
  <div className="bg-white px-1 pt-1 font-['Liberation_Sans',Arial,sans-serif] text-black">
    <div className="bg-[#ece9d8]">
      <TitleBar />
      <MenuBar />
      <TabBar />
      <main className="border border-[#808080]">
        <Toolbar />
        <div className="border-t border-white">
          <Oscillogram />
        </div>
        <NavRow />
        <Splitter />
        <div className="flex justify-center gap-[5px] pr-[5px] pb-0.5">
          <ChannelPanel />
          <FrequencyPanel />
          <SyncPanel />
          <ControlPanel />
        </div>
      </main>
      <StatusBar />
    </div>
    <div className="flex h-1 bg-linear-to-b from-[#1c50c0] to-[#3c80f0]">
      <span className="w-[93px] rounded-tr bg-[#388838]" />
    </div>
  </div>
);

export default App;
